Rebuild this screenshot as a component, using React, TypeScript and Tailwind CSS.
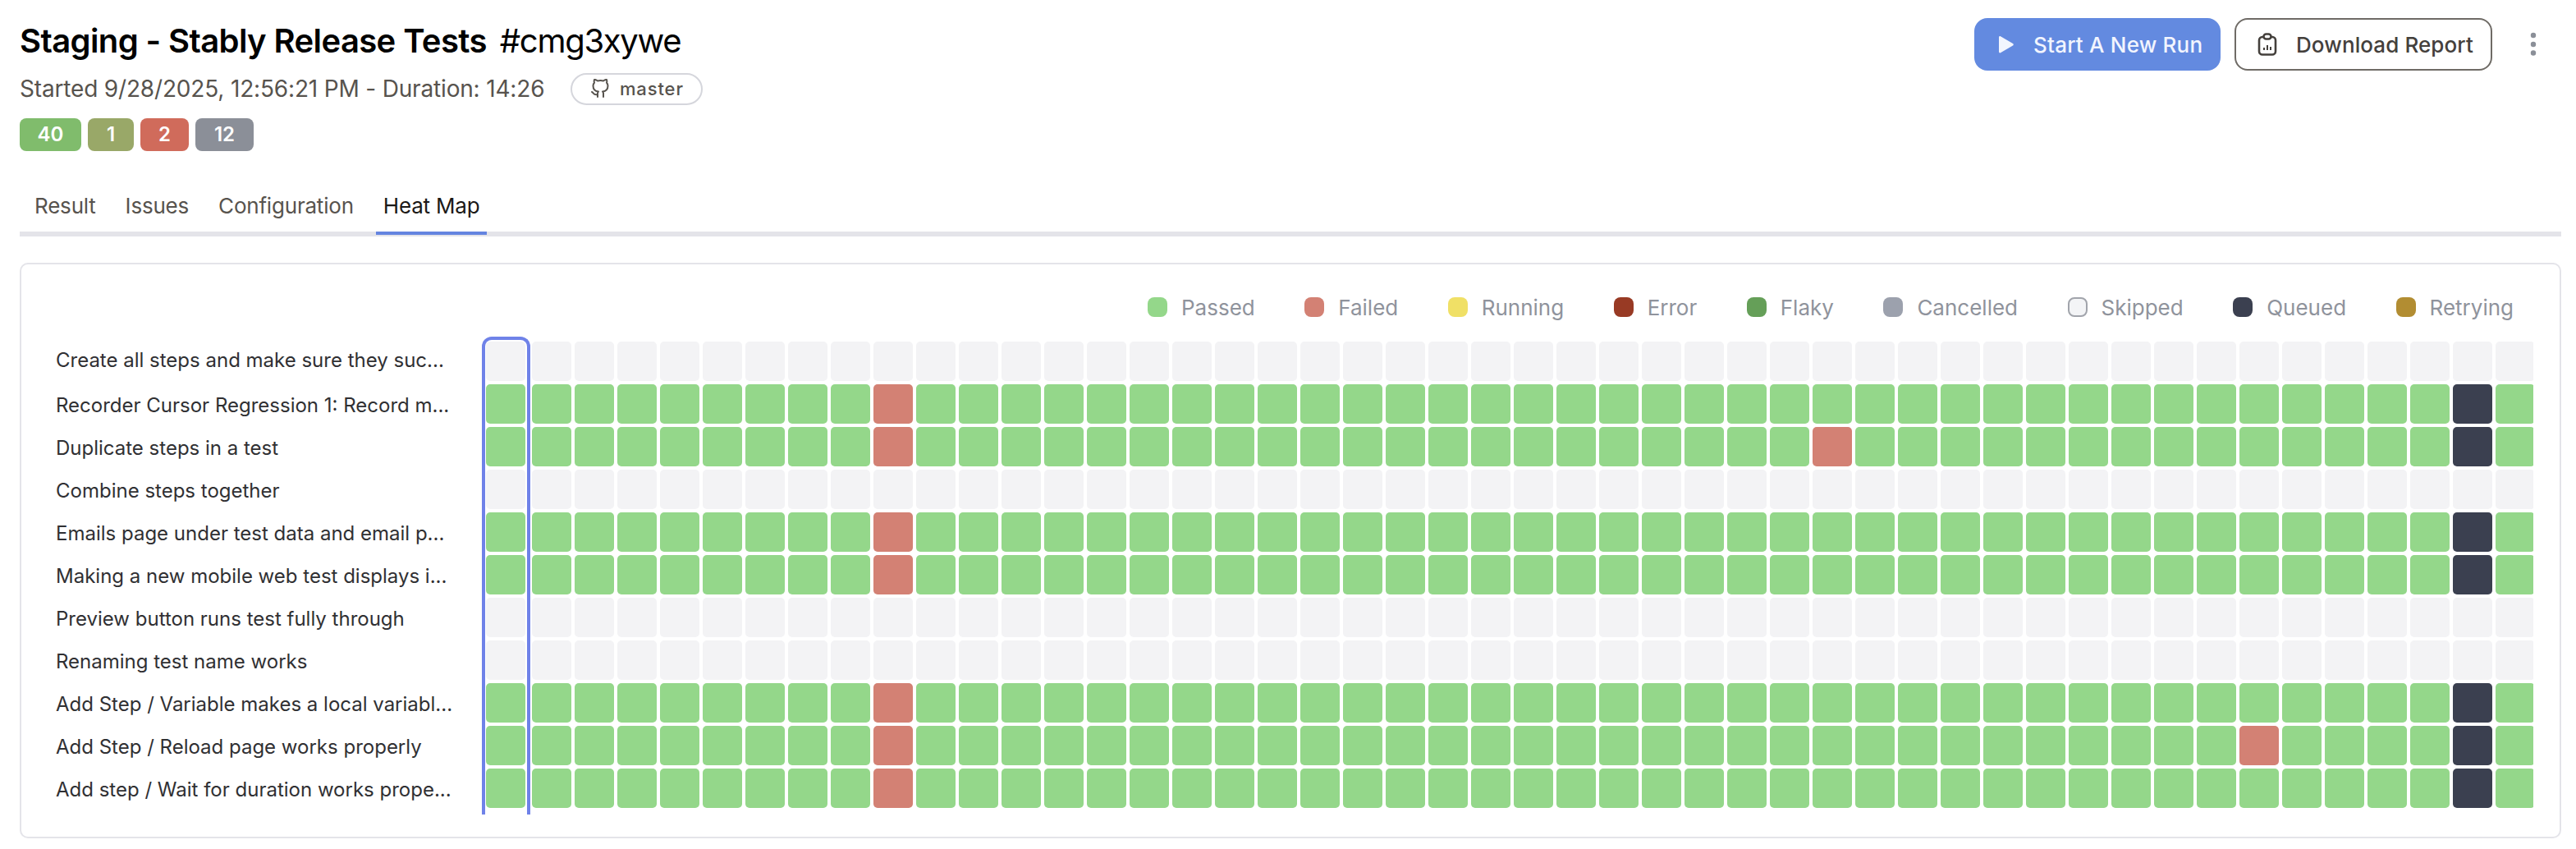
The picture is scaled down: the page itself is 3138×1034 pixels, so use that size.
import React from "react";
import { FiGithub } from "react-icons/fi";

const FAIL = "bg-[#d38174]";
const PASS = "bg-[#94d78a]";
const QUEUED = "bg-[#3b4050]";
const EMPTY = "bg-[#f3f3f5]";

const legend = [
  { label: "Passed", swatch: "bg-[#94d78a]" },
  { label: "Failed", swatch: "bg-[#d38174]" },
  { label: "Running", swatch: "bg-[#f0e066]" },
  { label: "Error", swatch: "bg-[#983a24]" },
  { label: "Flaky", swatch: "bg-[#659f58]" },
  { label: "Cancelled", swatch: "bg-[#9ca1ad]" },
  { label: "Skipped", swatch: "bg-[#f3f4f6] border-2 border-[#a1a4ab]" },
  { label: "Queued", swatch: "bg-[#3b4050]" },
  { label: "Retrying", swatch: "bg-[#b28d32]" },
];

const badges = [
  { n: 40, cls: "bg-[#80bc6c] w-[75px]" },
  { n: 1, cls: "bg-[#99a868] w-[56px]" },
  { n: 2, cls: "bg-[#d06b5b] w-[59px]" },
  { n: 12, cls: "bg-[#8b8f98] w-[71px]" },
];

const tabs = ["Result", "Issues", "Configuration", "Heat Map"];

// extra = column failed only in that row
const rows = [
  { name: "Create all steps and make sure they suc...", ran: false, extra: -1 },
  { name: "Recorder Cursor Regression 1: Record m...", ran: true, extra: -1 },
  { name: "Duplicate steps in a test", ran: true, extra: 31 },
  { name: "Combine steps together", ran: false, extra: -1 },
  { name: "Emails page under test data and email p...", ran: true, extra: -1 },
  { name: "Making a new mobile web test displays i...", ran: true, extra: -1 },
  { name: "Preview button runs test fully through", ran: false, extra: -1 },
  { name: "Renaming test name works", ran: false, extra: -1 },
  { name: "Add Step / Variable makes a local variabl...", ran: true, extra: -1 },
  { name: "Add Step / Reload page works properly", ran: true, extra: 41 },
  { name: "Add step / Wait for duration works prope...", ran: true, extra: -1 },
];

const columns = Array.from({ length: 48 }, (_, i) => i);

function cellColor(ran: boolean, extra: number, col: number) {
  if (!ran) return EMPTY;
  if (col === 46) return QUEUED;
  if (col === 9 || col === extra) return FAIL;
  return PASS;
}

function ReportIcon() {
  return (
    <svg width="26" height="28" viewBox="0 0 26 28" fill="none" stroke="#44403c" strokeWidth="2.6">
      <rect x="3" y="5" width="20" height="21.5" rx="4" />
      <rect x="8.5" y="1.5" width="9" height="6" rx="3" fill="#fff" />
      <path d="M9 21v-3M13 21v-6M17 21v-4" strokeWidth="2" />
    </svg>
  );
}

export default function App() {
  return (
    <div className="w-[3138px] h-[1034px] overflow-hidden bg-white pl-[24px] pr-[18px] font-['Inter',sans-serif]">
      <header className="flex justify-between items-start h-[198px]">
        <div className="pt-[28px]">
          <h1 className="text-[40px] leading-[44px] text-black font-semibold tracking-[-0.6px] flex gap-[16px]">
            <span>Staging - Stably Release Tests</span>
            <span className="font-normal tracking-[-1.3px]">#cmg3xywe</span>
          </h1>
          <div className="flex items-center mt-[16px] h-[40px]">
            <span className="text-[28px] tracking-[-0.17px] text-[#57534e]">Started 9/28/2025, 12:56:21 PM - Duration: 14:26</span>
            <span className="ml-[32px] h-[39px] w-[161px] rounded-full border-2 border-[#d5d6dc] flex items-center justify-center gap-[12px] text-[22px] font-medium tracking-[0.04em] text-[#57534e]">
              <FiGithub className="w-[24px] h-[24px]" />
              master
            </span>
          </div>
          <div className="flex gap-[8px] mt-[16px]">
            {badges.map((b) => (
              <span key={b.n} className={`h-[40px] rounded-[8px] flex items-center justify-center text-white text-[24px] font-semibold ${b.cls}`}>
                {b.n}
              </span>
            ))}
          </div>
        </div>
        <div className="flex items-start pt-[22px]">
          <button className="w-[300px] h-[64px] rounded-[16px] bg-[#638ae0] flex items-center gap-[24px] pl-[30px] text-[26px] font-medium tracking-[0.2px] text-[#f2f5fe]">
            <svg width="18" height="21" viewBox="0 0 18 21" fill="#f2f5fe">
              <path d="M0 1.5C0 .4 1 -.3 2 .3l15 8.6c1 .6 1 2.1 0 2.7L2 20.3C1 20.9 0 20.2 0 19.1z" />
            </svg>
            Start A New Run
          </button>
          <button className="ml-[17px] w-[314px] h-[64px] rounded-[16px] border-2 border-[#6f6b66] flex items-center gap-[22px] pl-[25px] text-[26px] font-medium tracking-[0.1px] text-[#44403c]">
            <ReportIcon />
            Download Report
          </button>
          <svg className="ml-[34px] mr-[18px] mt-[16px]" width="32" height="32" viewBox="0 0 32 32" fill="#8b8f98">
            <circle cx="16" cy="5" r="3.2" />
            <circle cx="16" cy="16" r="3.2" />
            <circle cx="16" cy="26.5" r="3.2" />
          </svg>
        </div>
      </header>

      <nav className="flex gap-[18px] pl-[9px] h-[90px] border-b-[6px] border-[#e4e4e9]">
        {tabs.map((t) => (
          <div
            key={t}
            className={`h-[88px] px-[9px] pt-[20px] flex items-center border-b-4 text-[26px] tracking-[-0.2px] ${
              t === "Heat Map" ? "text-[#1c1917] border-[#6484e0]" : "text-[#57534e] border-transparent"
            }`}
          >
            {t}
          </div>
        ))}
      </nav>

      <section className="mt-[32px] h-[701px] border-2 border-[#e4e4e9] rounded-[10px]">
        <div className="flex justify-end gap-[60.5px] h-[94px] pt-[40px] pr-[56px]">
          {legend.map((l) => (
            <div key={l.label} className="flex items-center gap-[17px] h-[24px]">
              <span className={`w-[24px] h-[24px] rounded-[8px] ${l.swatch}`} />
              <span className="text-[26px] text-[#8f939c]">{l.label}</span>
            </div>
          ))}
        </div>
        <div className="flex">
          <div className="w-[488px] ml-[42px] mr-[36px] flex flex-col">
            {rows.map((r, i) => (
              <div key={r.name} className={`h-[52px] flex items-center whitespace-nowrap text-[24px] text-[#303033] ${i === 0 ? "pb-[6px]" : ""}`}>
                {r.name}
              </div>
            ))}
          </div>
          <div className="relative">
            <div className="w-[2494px] overflow-hidden flex flex-col gap-[4px]">
              {rows.map((r) => (
                <div key={r.name} className="flex gap-[4px] w-max">
                  {columns.map((c) => (
                    <span
                      key={c}
                      className={`w-[48px] h-[48px] rounded-[5px] ${c === 0 ? "mr-[4px]" : ""} ${cellColor(r.ran, r.extra, c)}`}
                    />
                  ))}
                </div>
              ))}
            </div>
            <div className="absolute left-[-5px] top-[-6px] bottom-[-4px] w-[59px] border-x-4 border-t-4 border-[#6f82e8] rounded-t-[12px]" />
          </div>
        </div>
      </section>
    </div>
  );
}
